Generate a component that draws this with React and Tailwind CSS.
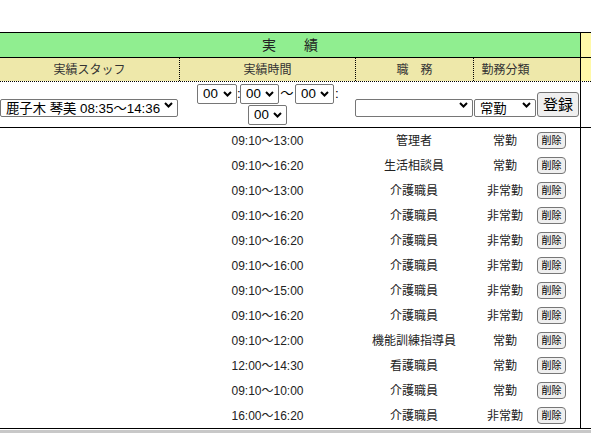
import React from "react";

const rows = [
  { time: "09:10〜13:00", job: "管理者", kind: "常勤" },
  { time: "09:10〜16:20", job: "生活相談員", kind: "常勤" },
  { time: "09:10〜13:00", job: "介護職員", kind: "非常勤" },
  { time: "09:10〜16:20", job: "介護職員", kind: "非常勤" },
  { time: "09:10〜16:20", job: "介護職員", kind: "非常勤" },
  { time: "09:10〜16:00", job: "介護職員", kind: "非常勤" },
  { time: "09:10〜15:00", job: "介護職員", kind: "非常勤" },
  { time: "09:10〜16:20", job: "介護職員", kind: "非常勤" },
  { time: "09:10〜12:00", job: "機能訓練指導員", kind: "常勤" },
  { time: "12:00〜14:30", job: "看護職員", kind: "常勤" },
  { time: "09:10〜10:00", job: "介護職員", kind: "常勤" },
  { time: "16:00〜16:20", job: "介護職員", kind: "非常勤" },
];

// native-looking select, arrow drawn on top
const Select = ({ value, options, className }) => (
  <div className={`relative shrink-0 ${className}`}>
    <select
      defaultValue={value}
      className="h-full w-full appearance-none rounded-[2px] border border-[#767676] bg-white pl-[5px] pr-[14px] text-[13.33px] leading-none text-black outline-none"
    >
      {options.map((o) => (
        <option key={o} value={o}>
          {o}
        </option>
      ))}
    </select>
    <svg
      className="pointer-events-none absolute right-[5px] top-1/2 -translate-y-1/2"
      width="9"
      height="6"
      viewBox="0 0 9 6"
    >
      <path d="M1 1l3.5 3.5L8 1" fill="none" stroke="#000" strokeWidth="2" />
    </svg>
  </div>
);

const mins = ["00", "10", "20", "30", "40", "50"];

export default function App() {
  return (
    <div className="h-[433px] w-[591px] overflow-hidden bg-white font-['Liberation_Sans','Noto_Sans_CJK_JP',sans-serif] text-[#222]">
      <div className="h-[32px]" />

      <div className="border-y border-black">
        {/* title */}
        <div className="flex h-[24px] border-b border-black box-content">
          <div className="flex w-[580px] items-center justify-center bg-[#90ee90] text-[14px] text-[#222]">
            実　　績
          </div>
          <div className="flex-1 border-l border-black bg-[#fff9a8]" />
        </div>

        {/* column heads */}
        <div className="flex h-[24px] border-b border-dotted border-black">
          <div className="flex w-[580px] bg-[#eee8aa] text-[12px] text-[#333]">
            <div className="flex w-[180px] items-center justify-center border-r border-dotted border-black">
              実績スタッフ
            </div>
            <div className="flex w-[176px] items-center justify-center border-r border-dotted border-black">
              実績時間
            </div>
            <div className="flex w-[118px] items-center justify-center border-r border-dotted border-black">
              職　務
            </div>
            <div className="flex w-[63px] items-center justify-center">勤務分類</div>
            <div className="flex-1" />
          </div>
          <div className="flex-1 border-l border-black bg-[#fff9a8]" />
        </div>

        {/* input row */}
        <div className="flex h-[46px] border-b border-black">
          <div className="flex w-[580px] items-center">
            <div className="w-[180px]">
              <Select
                value="鹿子木 琴美 08:35〜14:36"
                options={["鹿子木 琴美 08:35〜14:36"]}
                className="h-[18px] w-[178px]"
              />
            </div>
            <div className="flex w-[175px] flex-wrap content-center items-center justify-center gap-y-[1px] text-[13.33px] text-black">
              <Select value="00" options={["00", "08", "09"]} className="h-[20px] w-[40px]" />
              <span className="w-[3px] leading-none">:</span>
              <Select value="00" options={mins} className="h-[20px] w-[39px]" />
              <span className="w-[16px] text-center leading-none">〜</span>
              <Select value="00" options={["00", "16", "17"]} className="h-[20px] w-[39px]" />
              <span className="w-[4px] pl-[1px] leading-none">:</span>
              <Select value="00" options={mins} className="h-[20px] w-[39px]" />
            </div>
            <Select value="" options={[""]} className="h-[18px] w-[118px]" />
            <Select value="常勤" options={["常勤", "非常勤"]} className="ml-[1px] h-[18px] w-[62px]" />
            <button className="ml-[1px] h-[25px] w-[42px] rounded-[3px] border border-[#767676] bg-[#efefef] text-[15px] leading-none text-black">
              登録
            </button>
          </div>
          <div className="flex-1 border-l border-black" />
        </div>

        {/* registered records */}
        {rows.map((r, i) => (
          <div key={i} className="flex h-[25px]">
            <div className="flex w-[580px] items-center text-[12px]">
              <div className="w-[180px]" />
              <div className="w-[175px] text-center">{r.time}</div>
              <div className="w-[118px] text-center">{r.job}</div>
              <div className="w-[64px] text-center">{r.kind}</div>
              <button className="h-[17px] w-[29px] rounded-[4px] border border-[#767676] bg-[#efefef] text-[10px] leading-none text-black">
                削除
              </button>
            </div>
            <div className="flex-1 border-l border-black" />
          </div>
        ))}
      </div>

      <div className="mt-[1px] h-[10px] bg-[#c8c8c8]" />
    </div>
  );
}
